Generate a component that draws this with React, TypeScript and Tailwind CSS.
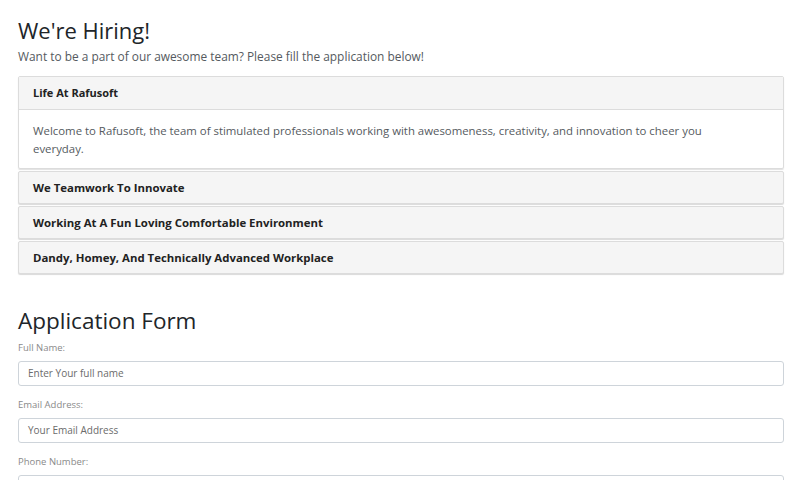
import React from "react";

const sections = [
  "We Teamwork To Innovate",
  "Working At A Fun Loving Comfortable Environment",
  "Dandy, Homey, And Technically Advanced Workplace",
];

function Field({ label, placeholder, first }: { label: string; placeholder: string; first?: boolean }) {
  return (
    <div className={first ? "mt-[7px]" : "mt-[13px]"}>
      <label className="block text-[9.5px] leading-[12px] text-[#8a8a8a]">{label}</label>
      <div className="mt-[7px] h-[25px] border border-[#ced4da] rounded-[3px] px-[9px] flex items-center text-[10px] text-[#6b6b6b]">
        {placeholder}
      </div>
    </div>
  );
}

export default function App() {
  return (
    <div className="w-[800px] h-[480px] overflow-hidden bg-white font-['Open_Sans',sans-serif]">
      <div className="pl-[18px] pr-[16px] pt-[16px]">
        <h1 className="text-[22px] leading-[28px] font-medium text-[#212529]">We're Hiring!</h1>
        <p className="mt-[4px] text-[11.9px] leading-[16px] text-[#555a60]">
          Want to be a part of our awesome team? Please fill the application below!
        </p>
        <div className="mt-[12px] flex flex-col gap-[2px]">
          <div className="border border-[#dcdcdc] rounded-[2px] shadow-[0_1px_1px_rgba(0,0,0,0.12)]">
            <div className="h-[33px] bg-[#f5f5f5] border-b border-[#dcdcdc] px-[14px] flex items-center text-[11px] font-bold text-[#222]">
              Life At Rafusoft
            </div>
            <div className="pl-[14px] pr-[40px] pt-[12px] pb-[10px] text-[11.4px] leading-[18px] text-[#555a60]">
              Welcome to Rafusoft, the team of stimulated professionals working with awesomeness, creativity, and innovation to cheer you everyday.
            </div>
          </div>
          {sections.map((s) => (
            <div
              key={s}
              className="h-[33px] bg-[#f5f5f5] border border-[#dcdcdc] rounded-[2px] shadow-[0_1px_1px_rgba(0,0,0,0.15)] px-[14px] flex items-center text-[11.4px] font-bold text-[#222]"
            >
              {s}
            </div>
          ))}
        </div>
        <h2 className="mt-[33px] text-[22.5px] leading-[28px] font-medium text-[#212529]">Application Form</h2>
        <Field label="Full Name:" placeholder="Enter Your full name" first />
        <Field label="Email Address:" placeholder="Your Email Address" />
        <Field label="Phone Number:" placeholder="Your Phone Number" />
      </div>
    </div>
  );
}
